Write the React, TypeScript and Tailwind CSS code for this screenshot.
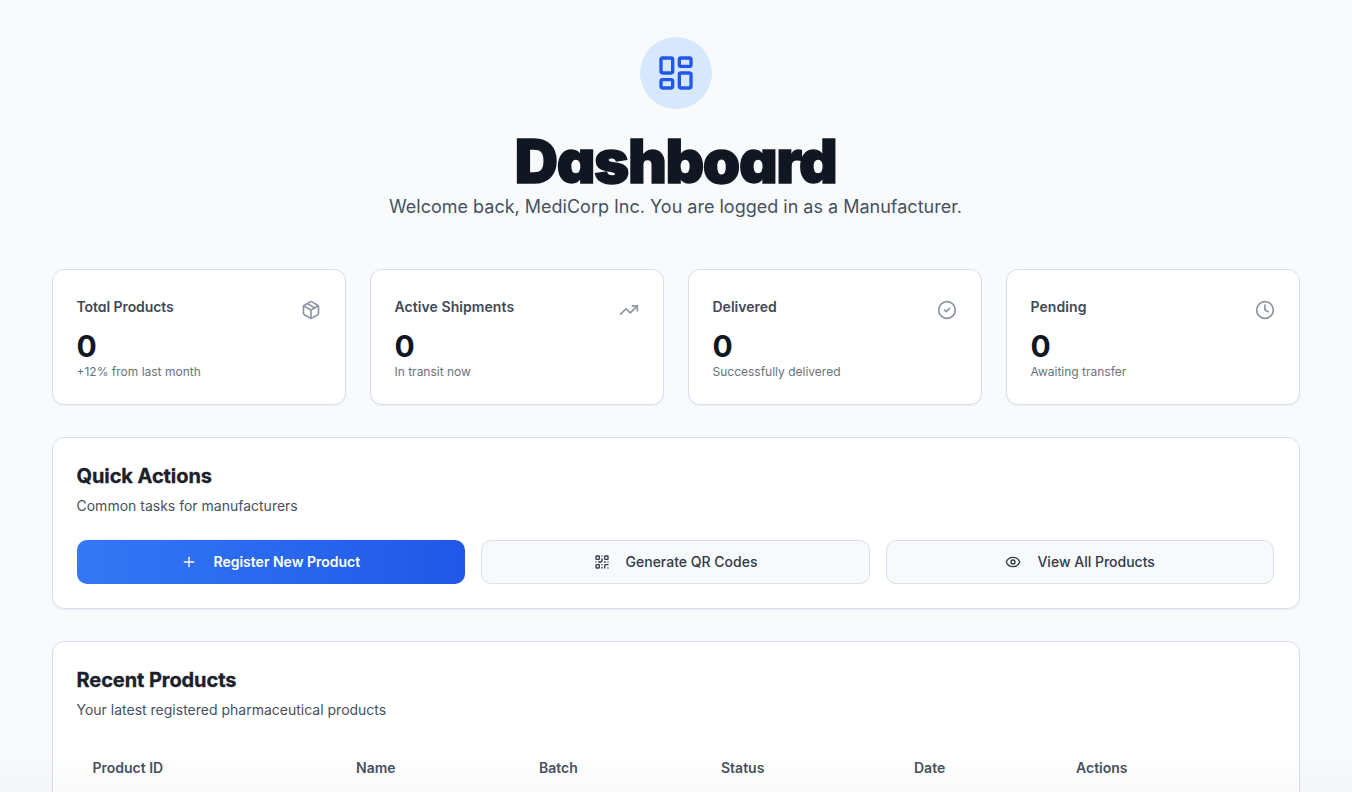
import { LayoutDashboard, Package, TrendingUp, CircleCheck, Clock, Plus, QrCode, Eye } from "lucide-react";

const stats = [
  { title: "Total Products", note: "+12% from last month", Icon: Package, tracking: "tracking-[-0.07px]" },
  { title: "Active Shipments", note: "In transit now", Icon: TrendingUp, tracking: "tracking-[0.07px]" },
  { title: "Delivered", note: "Successfully delivered", Icon: CircleCheck, tracking: "tracking-[0px]" },
  { title: "Pending", note: "Awaiting transfer", Icon: Clock, tracking: "tracking-[0.07px]" },
];

const columns = [
  { label: "Product ID", width: "w-[263.5px]" },
  { label: "Name", width: "w-[183px]" },
  { label: "Batch", width: "w-[182px]" },
  { label: "Status", width: "w-[193px]" },
  { label: "Date", width: "w-[162px]" },
  { label: "Actions", width: "w-[182px]" },
];

const card = "rounded-xl border border-[#d9dfeb] bg-white shadow-[0_1px_2px_rgba(15,23,42,0.06)]";
const heading = "[font-feature-settings:'cv11']";
const sectionTitle = "text-xl leading-7 font-bold tracking-[-0.08px] text-[#1b202a] [-webkit-text-stroke:0.3px_#1b202a] [font-feature-settings:'cv11']";
const outlined = "flex h-11 items-center justify-center gap-4 rounded-[10px] border border-[#d9dfeb] bg-[#f8f9fb] text-[#303a49]";

export default function App() {
  return (
    <div className="relative h-[792px] overflow-hidden bg-[#f8fafc] pt-[37px] pr-[52.5px] pl-[51.5px] font-['Inter',sans-serif] text-[#111722]">
      <header className="flex flex-col items-center">
        <div className="flex size-[72px] items-center justify-center rounded-full bg-[#d7e7fe] text-[#2158eb]">
          <LayoutDashboard size={40} />
        </div>
        <h1 className={`mt-[22px] mb-0.5 text-[60px] leading-[60px] font-black tracking-[-1.4px] [-webkit-text-stroke:1.4px_#111722] ${heading}`}>Dashboard</h1>
        <p className="text-lg leading-7 text-[#475160]">Welcome back, MediCorp Inc. You are logged in as a Manufacturer.</p>
      </header>

      <section className="mt-12 grid grid-cols-4 gap-6">
        {stats.map(({ title, note, Icon, tracking }) => (
          <div key={title} className={`h-[136px] px-6 pt-[27px] ${card}`}>
            <div className="flex h-[31px] justify-between">
              <h3 className={`text-sm leading-5 font-semibold text-[#3f4958] ${tracking} ${heading}`}>{title}</h3>
              <Icon size={20} className="mt-[3px] text-[#8d95a4]" strokeWidth={2} />
            </div>
            <div className="text-[30px] leading-9 font-bold">0</div>
            <p className="text-xs leading-4 text-[#697281]">{note}</p>
          </div>
        ))}
      </section>

      <section className={`mt-8 h-[172px] p-6 ${card}`}>
        <h2 className={sectionTitle}>Quick Actions</h2>
        <p className="mt-1.5 text-sm leading-5 text-[#475160]">Common tasks for manufacturers</p>
        <div className="mt-6 grid grid-cols-3 gap-4 text-sm font-medium">
          <button className="flex h-11 items-center justify-center gap-4 rounded-[10px] bg-linear-to-r from-[#3478f5] to-[#2157e7] font-semibold text-white">
            <Plus size={16} />
            Register New Product
          </button>
          <button className={outlined}>
            <QrCode size={16} />
            Generate QR Codes
          </button>
          <button className={outlined}>
            <Eye size={16} />
            View All Products
          </button>
        </div>
      </section>

      <section className={`mt-8 h-[400px] p-6 ${card}`}>
        <h2 className={sectionTitle}>Recent Products</h2>
        <p className="mt-1.5 text-sm leading-5 text-[#475160]">Your latest registered pharmaceutical products</p>
        <div className="mt-6 flex h-12 items-center pl-4 text-sm font-semibold text-[#475160]">
          {columns.map(({ label, width }) => (
            <div key={label} className={width}>{label}</div>
          ))}
        </div>
      </section>

      <div className="pointer-events-none absolute inset-x-0 bottom-0 h-10 bg-linear-to-b from-transparent to-black/[0.02]" />
    </div>
  );
}
